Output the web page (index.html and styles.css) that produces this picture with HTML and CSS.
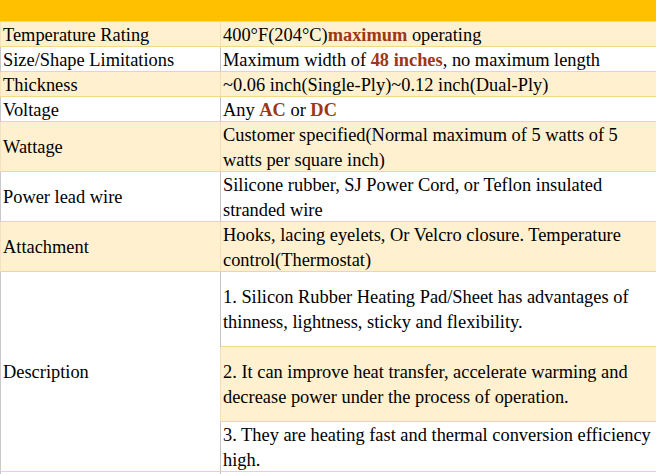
FILE: index.html
```html
<!DOCTYPE html>
<html>
<head>
<meta charset="utf-8">
<link rel="stylesheet" href="styles.css">
</head>
<body>
<div class="spec">
  <div class="head"></div>

  <div class="k alt"><span>Temperature Rating</span></div>
  <div class="v alt"><span>400°F(204°C)<b>maximum</b> operating</span></div>

  <div class="k"><span>Size/Shape Limitations</span></div>
  <div class="v"><span>Maximum width of <b>48 inches</b>, no maximum length</span></div>

  <div class="k alt"><span>Thickness</span></div>
  <div class="v alt"><span>~0.06 inch(Single-Ply)~0.12 inch(Dual-Ply)</span></div>

  <div class="k"><span>Voltage</span></div>
  <div class="v"><span>Any <b>AC</b> or <b>DC</b></span></div>

  <div class="k alt"><span>Wattage</span></div>
  <div class="v alt"><span>Customer specified(Normal maximum of 5 watts of 5 watts per square inch)</span></div>

  <div class="k"><span>Power lead wire</span></div>
  <div class="v"><span>Silicone rubber, SJ Power Cord, or Teflon insulated stranded wire</span></div>

  <div class="k alt"><span>Attachment</span></div>
  <div class="v alt"><span>Hooks, lacing eyelets, Or Velcro closure. Temperature control(Thermostat)</span></div>

  <div class="k desc"><span>Description</span></div>
  <div class="v"><span>1. Silicon Rubber Heating Pad/Sheet has advantages of thinness, lightness, sticky and flexibility.</span></div>
  <div class="v alt"><span>2. It can improve heat transfer, accelerate warming and decrease power under the process of operation.</span></div>
  <div class="v"><span>3. They are heating fast and thermal conversion efficiency high.</span></div>

  <div class="k tail"></div>
  <div class="v tail"></div>
</div>
</body>
</html>
```

FILE: styles.css
```css
html, body {
  margin: 0;
  padding: 0;
  background: #ffffff;
  overflow: hidden;
}

.spec {
  width: 662px;
  display: grid;
  grid-template-columns: 220px 1fr;
  grid-template-rows: 22px 25px 25px 25px 25px 50px 50px 50px 75px 75px 50px 20px;
  font-family: "Liberation Serif", "Times New Roman", serif;
  font-size: 18.4px;
  line-height: 25px;
  color: #000000;
}

.head {
  grid-column: 1 / 3;
  background: #ffc000;
  border-bottom: 1px solid #f7d77e;
}

.k, .v {
  box-sizing: border-box;
  display: flex;
  align-items: center;
  padding-top: 2px;
  border-bottom: 1px solid #f3d889;
  background: #ffffff;
}

.k {
  padding-left: 2px;
  border-left: 1px solid #c9c9c9;
}

.v {
  padding-left: 2px;
  padding-right: 2px;
  border-left: 1px solid #c4c4c4;
}

.alt {
  background: #fff1cf;
}

.k.alt {
  border-left-color: #f2e2bd;
}

.v.alt {
  border-left-color: #f1e0b6;
}

.desc {
  grid-row: span 3;
}

.tail {
  border-bottom: none;
}

b {
  color: #9c3818;
  font-weight: bold;
}
```
